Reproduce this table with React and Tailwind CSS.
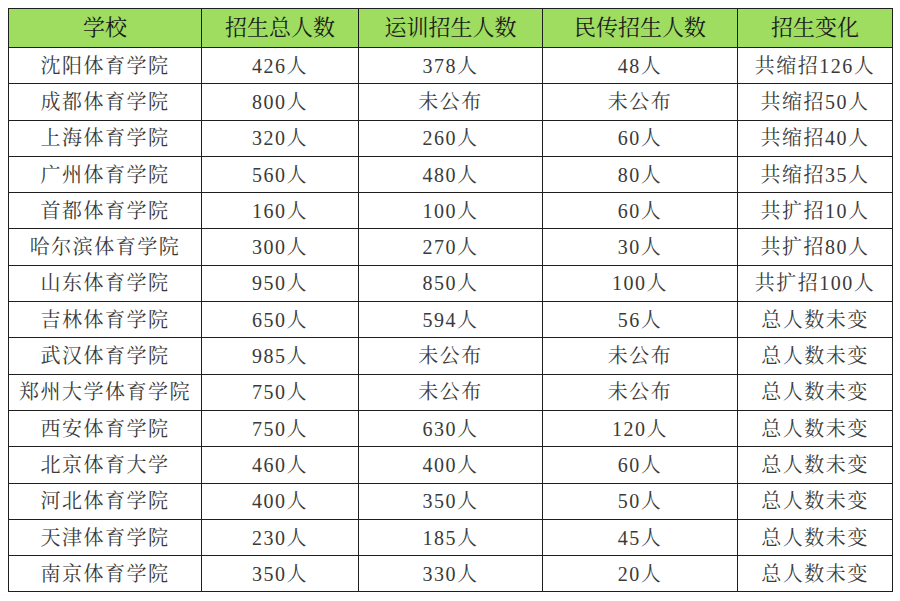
const headers = ["学校", "招生总人数", "运训招生人数", "民传招生人数", "招生变化"];

const rows = [
  ["沈阳体育学院", "426人", "378人", "48人", "共缩招126人"],
  ["成都体育学院", "800人", "未公布", "未公布", "共缩招50人"],
  ["上海体育学院", "320人", "260人", "60人", "共缩招40人"],
  ["广州体育学院", "560人", "480人", "80人", "共缩招35人"],
  ["首都体育学院", "160人", "100人", "60人", "共扩招10人"],
  ["哈尔滨体育学院", "300人", "270人", "30人", "共扩招80人"],
  ["山东体育学院", "950人", "850人", "100人", "共扩招100人"],
  ["吉林体育学院", "650人", "594人", "56人", "总人数未变"],
  ["武汉体育学院", "985人", "未公布", "未公布", "总人数未变"],
  ["郑州大学体育学院", "750人", "未公布", "未公布", "总人数未变"],
  ["西安体育学院", "750人", "630人", "120人", "总人数未变"],
  ["北京体育大学", "460人", "400人", "60人", "总人数未变"],
  ["河北体育学院", "400人", "350人", "50人", "总人数未变"],
  ["天津体育学院", "230人", "185人", "45人", "总人数未变"],
  ["南京体育学院", "350人", "330人", "20人", "总人数未变"],
];

const widths = ["w-[193px]", "w-[157px]", "w-[184px]", "w-[195px]", "w-[155px]"];

export default function App() {
  return (
    <div
      className="w-[900px] h-[601px] bg-white pt-[8px] pl-[8px]"
      style={{ fontFamily: '"Liberation Serif", "Noto Serif CJK SC", "Noto Sans CJK SC", serif' }}
    >
      <table className="border-collapse border-[1.5px] border-[#1e1e1e] table-fixed">
        <thead>
          <tr className="bg-[#9edd5f] h-[39px]">
            {headers.map((h, i) => (
              <th
                key={h}
                className={`${widths[i]} border-[1.5px] border-[#1e1e1e] text-[22px] font-normal text-[#1a1a1a] text-center leading-none p-0`}
              >
                {h}
              </th>
            ))}
          </tr>
        </thead>
        <tbody>
          {rows.map((r) => (
            <tr key={r[0]} className="h-[36.3px]">
              {r.map((c, i) => (
                <td
                  key={i}
                  className="border-[1.5px] border-[#1e1e1e] text-[20px] tracking-[1.5px] text-[#3a3a3a] text-center leading-none p-0 whitespace-nowrap"
                >
                  {c}
                </td>
              ))}
            </tr>
          ))}
        </tbody>
      </table>
    </div>
  );
}
